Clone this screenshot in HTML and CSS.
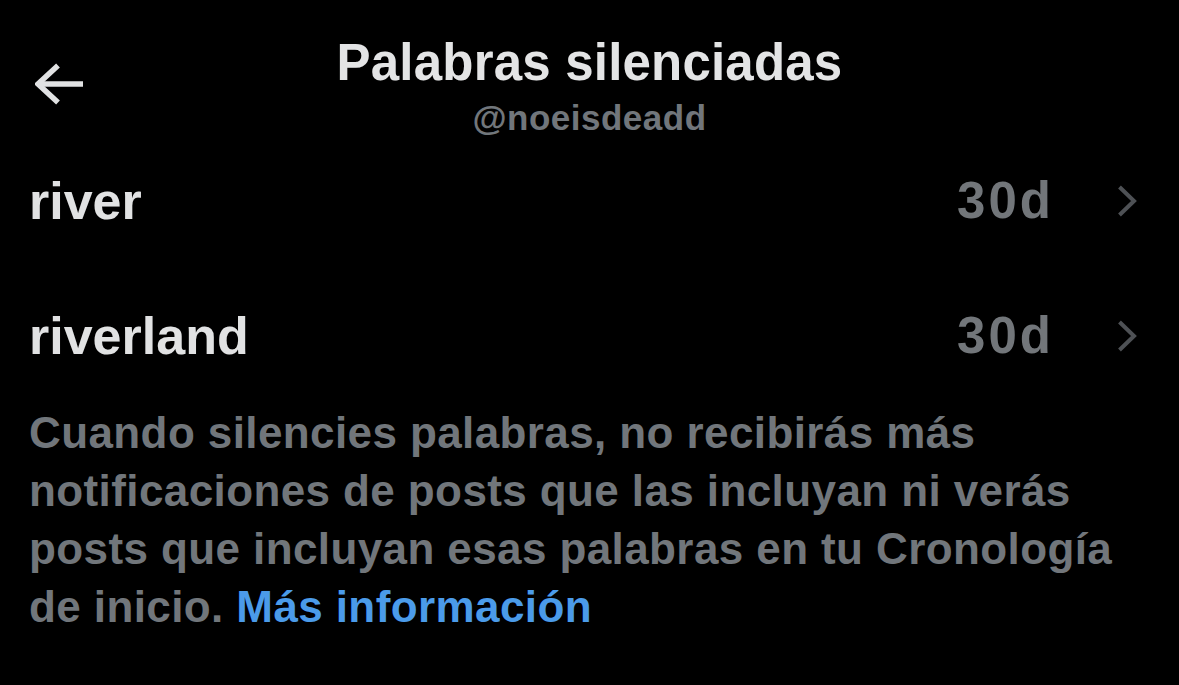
FILE: index.html
```html
<!DOCTYPE html>
<html lang="es">
<head>
<meta charset="utf-8">
<title>Palabras silenciadas</title>
<link rel="stylesheet" href="styles.css">
</head>
<body>
<div class="screen">
  <header class="header">
    <div class="back">
      <svg width="50" height="42" viewBox="0 0 50 42" aria-hidden="true">
        <polyline points="23,2.5 3,21 23,39.5" fill="none" stroke="#e1e2e3" stroke-width="5.5"/>
        <line x1="3.5" y1="21" x2="48" y2="21" stroke="#e1e2e3" stroke-width="5.5"/>
      </svg>
    </div>
    <div class="titles">
      <h1 class="title">Palabras silenciadas</h1>
      <div class="handle">@noeisdeadd</div>
    </div>
    <div></div>
  </header>
  <ul class="words">
    <li class="word">
      <span class="name">river</span>
      <span class="dur">30d</span>
      <svg class="chev" width="20" height="32" viewBox="0 0 20 32" aria-hidden="true"><polyline points="2.5,2 17,16 2.5,30" fill="none" stroke="#4e5155" stroke-width="4"/></svg>
    </li>
    <li class="word">
      <span class="name">riverland</span>
      <span class="dur">30d</span>
      <svg class="chev" width="20" height="32" viewBox="0 0 20 32" aria-hidden="true"><polyline points="2.5,2 17,16 2.5,30" fill="none" stroke="#4e5155" stroke-width="4"/></svg>
    </li>
  </ul>
  <p class="info">Cuando silencies palabras, no recibirás más notificaciones de posts que las incluyan ni verás posts que incluyan esas palabras en tu Cronología de inicio. <a class="more" href="#">Más información</a></p>
</div>
</body>
</html>
```
FILE: styles.css
```css
html, body {
  margin: 0;
  padding: 0;
  background: #000;
}
body {
  width: 1179px;
  height: 685px;
  overflow: hidden;
  font-family: "Liberation Sans", Arial, sans-serif;
  font-weight: 700;
}
.screen {
  display: flex;
  flex-direction: column;
}
.header {
  display: grid;
  grid-template-columns: 1fr auto 1fr;
  padding-top: 35px;
}
.back {
  padding-left: 35px;
  padding-top: 28px;
}
.back svg { display: block; }
.titles {
  display: flex;
  flex-direction: column;
  align-items: center;
}
.title {
  margin: 0;
  font-size: 51px;
  line-height: 56px;
  font-weight: 700;
  letter-spacing: 0.2px;
  color: #e3e4e5;
}
.handle {
  margin-top: 7px;
  font-size: 35px;
  line-height: 40px;
  color: #71767b;
  letter-spacing: 0.5px;
}
.words {
  list-style: none;
  margin: 0;
  padding: 33px 42px 0 29px;
  display: flex;
  flex-direction: column;
  gap: 75px;
}
.word {
  display: flex;
  align-items: center;
  height: 60px;
}
.name {
  flex: 1;
  font-size: 52px;
  line-height: 60px;
  color: #e1e2e3;
}
.dur {
  font-size: 51px;
  line-height: 60px;
  color: #72767a;
  letter-spacing: 3px;
  margin-right: 63px;
}
.chev { display: block; }
.info {
  margin: 38px 0 0;
  padding: 0 40px 0 29px;
  font-size: 44px;
  line-height: 58px;
  letter-spacing: 0.4px;
  color: #71767b;
}
.more {
  color: #4b9be9;
  text-decoration: none;
}
```
